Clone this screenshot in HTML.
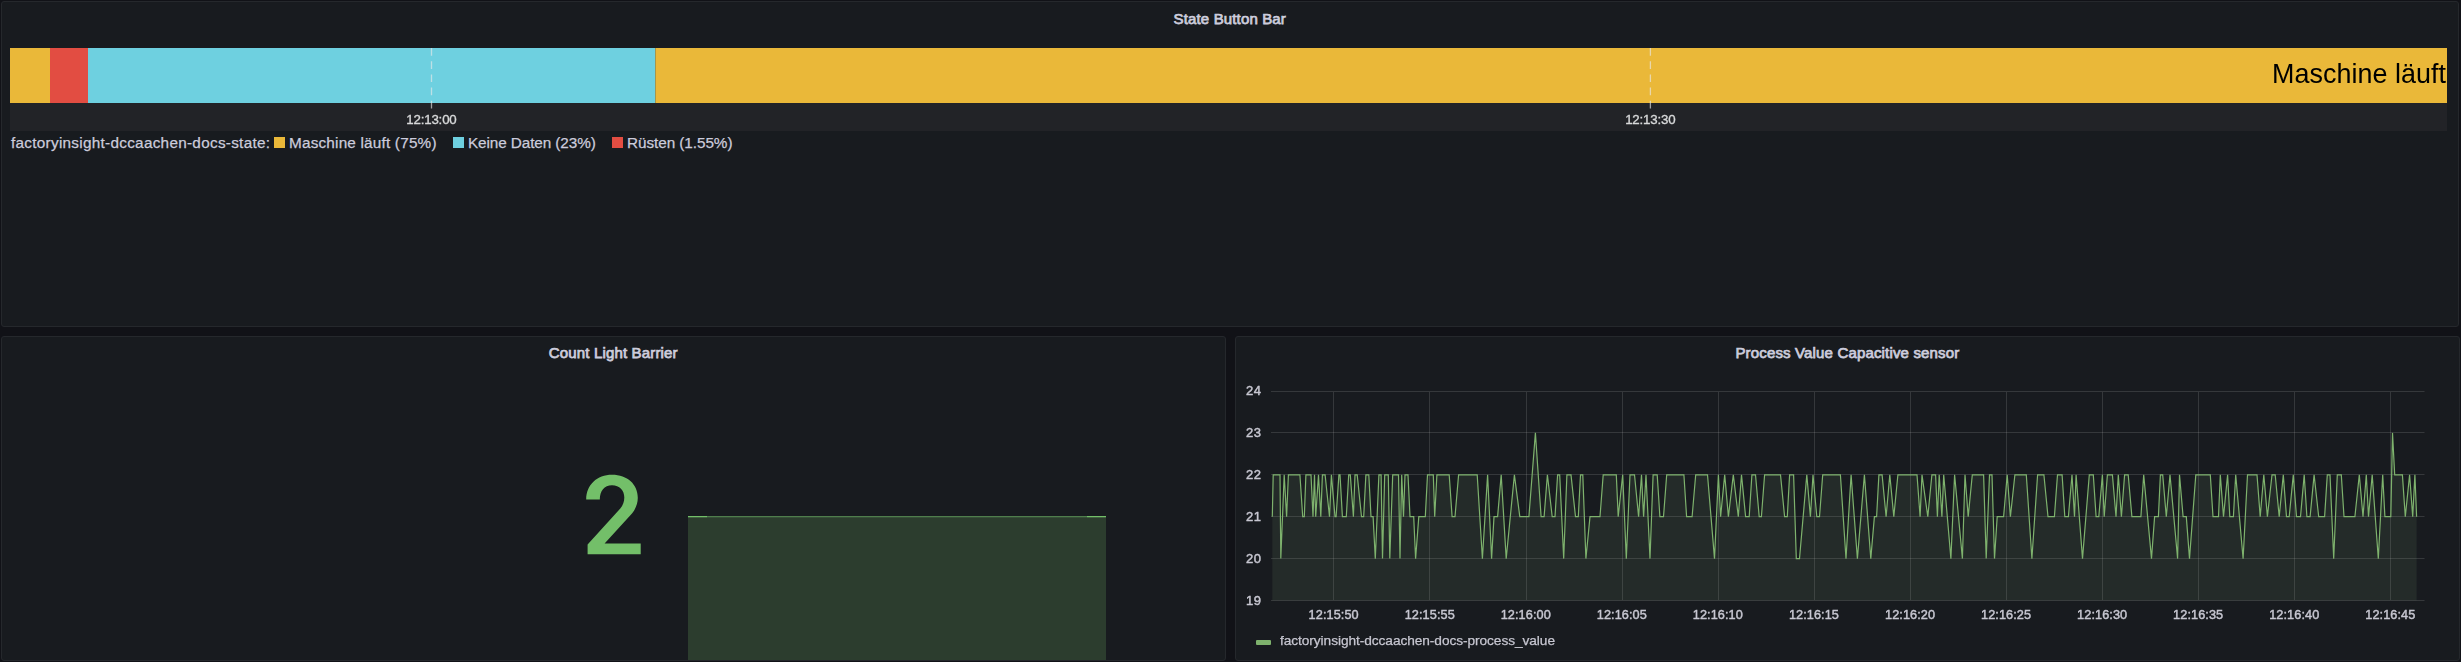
<!DOCTYPE html>
<html><head><meta charset="utf-8"><style>
html,body{margin:0;padding:0;background:#111217;width:2461px;height:662px;overflow:hidden}
svg{display:block}
text{font-family:"Liberation Sans",sans-serif}
</style></head><body>
<svg width="2461" height="662" viewBox="0 0 2461 662">

<rect x="1.5" y="1.5" width="2457" height="325" rx="2.5" fill="#181b1f" stroke="#25282c" stroke-width="1"/>
<rect x="1.5" y="336.5" width="1224" height="324" rx="2.5" fill="#181b1f" stroke="#25282c" stroke-width="1"/>
<rect x="1235.5" y="336.5" width="1224" height="324" rx="2.5" fill="#181b1f" stroke="#25282c" stroke-width="1"/>
<text x="1229.7" y="24.4" font-size="15.0" font-weight="normal" fill="#ccccdc" text-anchor="middle" textLength="112.3" lengthAdjust="spacing" stroke="#ccccdc" stroke-width="0.75">State Button Bar</text>
<text x="613.2" y="358.4" font-size="15.0" font-weight="normal" fill="#ccccdc" text-anchor="middle" textLength="128.7" lengthAdjust="spacing" stroke="#ccccdc" stroke-width="0.75">Count Light Barrier</text>
<text x="1847.3" y="358.4" font-size="15.0" font-weight="normal" fill="#ccccdc" text-anchor="middle" textLength="223.8" lengthAdjust="spacing" stroke="#ccccdc" stroke-width="0.75">Process Value Capacitive sensor</text>
<rect x="10" y="103" width="2437" height="28" fill="#222327"/>
<rect x="10" y="48" width="40" height="55" fill="#eab839"/>
<rect x="50" y="48" width="38" height="55" fill="#e24d42"/>
<rect x="88" y="48" width="567.4" height="55" fill="#6ed0e0"/>
<rect x="655.4" y="48" width="1791.6" height="55" fill="#eab839"/>
<line x1="431.5" y1="48" x2="431.5" y2="108.5" stroke="#e8e8e8" stroke-opacity="0.65" stroke-width="1.3" stroke-dasharray="7.7 5.5"/>
<line x1="1650.4" y1="48" x2="1650.4" y2="108.5" stroke="#e8e8e8" stroke-opacity="0.65" stroke-width="1.3" stroke-dasharray="7.7 5.5"/>
<text x="11" y="148" font-size="15.3" font-weight="normal" fill="#ccccdc" text-anchor="start" textLength="259" lengthAdjust="spacing" stroke="#ccccdc" stroke-width="0.25">factoryinsight-dccaachen-docs-state:</text>
<rect x="274" y="137" width="11" height="11" fill="#eab839"/>
<text x="289" y="148" font-size="15.3" font-weight="normal" fill="#ccccdc" text-anchor="start" textLength="147.5" lengthAdjust="spacing" stroke="#ccccdc" stroke-width="0.25">Maschine läuft (75%)</text>
<rect x="453" y="137" width="11" height="11" fill="#6ed0e0"/>
<text x="468" y="148" font-size="15.3" font-weight="normal" fill="#ccccdc" text-anchor="start" textLength="127.8" lengthAdjust="spacing" stroke="#ccccdc" stroke-width="0.25">Keine Daten (23%)</text>
<rect x="612" y="137" width="11" height="11" fill="#e24d42"/>
<text x="627" y="148" font-size="15.3" font-weight="normal" fill="#ccccdc" text-anchor="start" textLength="105.5" lengthAdjust="spacing" stroke="#ccccdc" stroke-width="0.25">Rüsten (1.55%)</text>
<path d="M612,474.8 C627.5,474.8 637.8,484.5 637.8,497.8 C637.8,503.5 635.8,508.5 632.2,513.3 L604.6,543.4 L640.7,543.4 L640.7,554.2 L587.6,554.2 L587.6,544.6 L620.3,508.6 C623,505.3 624.3,501.6 624.3,497.6 C624.3,490.3 619.6,485.3 612,485.3 C604.2,485.3 599.8,491 599.8,499.6 L586.2,499.6 C586.2,485 597,474.8 612,474.8 Z" fill="#73bf69"/>
<rect x="688" y="517" width="418" height="143" fill="#2c3d2e"/>
<rect x="688" y="516" width="19" height="1.3" fill="#73bf69"/>
<rect x="707" y="516" width="380" height="1.3" fill="#4f7d4c"/>
<rect x="1087" y="516" width="19" height="1.3" fill="#73bf69"/>
<line x1="1271" y1="600.5" x2="2424.5" y2="600.5" stroke="#c8c8c8" stroke-opacity="0.17" stroke-width="1"/>
<line x1="1271" y1="558.5" x2="2424.5" y2="558.5" stroke="#c8c8c8" stroke-opacity="0.17" stroke-width="1"/>
<line x1="1271" y1="516.5" x2="2424.5" y2="516.5" stroke="#c8c8c8" stroke-opacity="0.17" stroke-width="1"/>
<line x1="1271" y1="474.5" x2="2424.5" y2="474.5" stroke="#c8c8c8" stroke-opacity="0.17" stroke-width="1"/>
<line x1="1271" y1="432.5" x2="2424.5" y2="432.5" stroke="#c8c8c8" stroke-opacity="0.17" stroke-width="1"/>
<line x1="1271" y1="391.5" x2="2424.5" y2="391.5" stroke="#c8c8c8" stroke-opacity="0.17" stroke-width="1"/>
<line x1="1333.5" y1="392" x2="1333.5" y2="600" stroke="#c8c8c8" stroke-opacity="0.17" stroke-width="1"/>
<line x1="1429.5" y1="392" x2="1429.5" y2="600" stroke="#c8c8c8" stroke-opacity="0.17" stroke-width="1"/>
<line x1="1526.5" y1="392" x2="1526.5" y2="600" stroke="#c8c8c8" stroke-opacity="0.17" stroke-width="1"/>
<line x1="1622.5" y1="392" x2="1622.5" y2="600" stroke="#c8c8c8" stroke-opacity="0.17" stroke-width="1"/>
<line x1="1718.5" y1="392" x2="1718.5" y2="600" stroke="#c8c8c8" stroke-opacity="0.17" stroke-width="1"/>
<line x1="1814.5" y1="392" x2="1814.5" y2="600" stroke="#c8c8c8" stroke-opacity="0.17" stroke-width="1"/>
<line x1="1910.5" y1="392" x2="1910.5" y2="600" stroke="#c8c8c8" stroke-opacity="0.17" stroke-width="1"/>
<line x1="2006.5" y1="392" x2="2006.5" y2="600" stroke="#c8c8c8" stroke-opacity="0.17" stroke-width="1"/>
<line x1="2102.5" y1="392" x2="2102.5" y2="600" stroke="#c8c8c8" stroke-opacity="0.17" stroke-width="1"/>
<line x1="2198.5" y1="392" x2="2198.5" y2="600" stroke="#c8c8c8" stroke-opacity="0.17" stroke-width="1"/>
<line x1="2294.5" y1="392" x2="2294.5" y2="600" stroke="#c8c8c8" stroke-opacity="0.17" stroke-width="1"/>
<line x1="2390.5" y1="392" x2="2390.5" y2="600" stroke="#c8c8c8" stroke-opacity="0.17" stroke-width="1"/>
<polygon points="1272.3,600.5 1272.3,516.7 1273.2,474.8 1280.0,474.8 1280.8,558.6 1284.2,474.8 1286.6,516.7 1288.4,474.8 1299.9,474.8 1302.7,516.7 1304.3,516.7 1305.9,474.8 1311.0,474.8 1313.0,516.7 1314.5,474.8 1315.7,516.7 1318.5,474.8 1320.8,516.7 1322.4,474.8 1325.1,474.8 1329.5,516.7 1331.4,474.8 1335.0,516.7 1336.1,516.7 1338.9,474.8 1340.0,474.8 1342.4,516.7 1346.3,516.7 1348.7,474.8 1350.3,474.8 1353.4,516.7 1355.0,474.8 1357.2,474.8 1361.5,516.7 1363.7,516.7 1365.9,474.8 1368.8,474.8 1371.0,516.7 1373.1,516.7 1375.3,558.6 1378.9,474.8 1381.1,474.8 1382.5,558.6 1384.7,474.8 1388.3,474.8 1389.8,558.6 1392.7,474.8 1398.5,474.8 1400.0,558.6 1401.7,474.8 1403.5,516.7 1405.0,474.8 1408.0,474.8 1410.0,516.7 1413.7,516.7 1415.6,558.6 1418.8,516.7 1425.3,516.7 1427.5,474.8 1433.3,474.8 1434.7,516.7 1436.9,474.8 1449.2,474.8 1452.1,516.7 1455.0,516.7 1458.6,474.8 1477.2,474.8 1482.4,558.6 1487.6,474.8 1491.6,558.6 1494.0,516.7 1497.6,516.7 1501.2,474.8 1506.2,558.6 1514.4,474.8 1519.8,516.7 1528.9,516.7 1535.4,432.9 1541.1,516.7 1544.1,516.7 1547.4,474.8 1552.2,516.7 1555.0,516.7 1557.6,474.8 1559.7,474.8 1563.7,558.6 1566.9,474.8 1571.0,474.8 1575.5,516.7 1578.3,516.7 1580.5,474.8 1582.8,474.8 1585.9,558.6 1590.0,516.7 1600.0,516.7 1603.2,474.8 1616.3,474.8 1618.2,516.7 1622.7,474.8 1626.3,558.6 1630.0,474.8 1634.5,474.8 1638.6,516.7 1641.5,474.8 1643.6,516.7 1646.0,474.8 1650.0,558.6 1653.1,474.8 1657.2,474.8 1659.9,516.7 1663.5,516.7 1666.7,474.8 1683.9,474.8 1686.6,516.7 1692.1,516.7 1695.7,474.8 1707.5,474.8 1714.5,558.6 1718.4,474.8 1720.6,516.7 1724.7,474.8 1728.4,516.7 1733.3,474.8 1738.3,516.7 1741.5,474.8 1745.6,516.7 1749.2,516.7 1751.9,474.8 1755.5,474.8 1759.2,516.7 1761.4,516.7 1764.6,474.8 1780.5,474.8 1784.6,516.7 1787.3,516.7 1789.6,474.8 1793.6,474.8 1796.3,558.6 1799.5,558.6 1806.8,474.8 1810.4,516.7 1813.0,474.8 1816.8,516.7 1819.5,516.7 1822.7,474.8 1840.4,474.8 1846.0,558.6 1851.1,474.8 1857.4,558.6 1864.4,474.8 1870.8,558.6 1874.4,516.7 1876.6,516.7 1878.9,474.8 1882.1,474.8 1886.1,516.7 1889.8,474.8 1893.8,516.7 1897.9,474.8 1917.0,474.8 1920.1,516.7 1922.0,474.8 1927.8,516.7 1931.9,474.8 1935.6,474.8 1937.4,516.7 1939.2,474.8 1941.9,516.7 1943.7,474.8 1950.9,558.6 1954.6,474.8 1962.4,558.6 1965.0,474.8 1968.2,516.7 1972.3,474.8 1983.6,474.8 1986.2,558.6 1989.5,474.8 1992.0,474.8 1994.5,558.6 1997.2,516.7 2003.6,516.7 2007.2,474.8 2010.4,516.7 2014.9,474.8 2026.3,474.8 2031.9,558.6 2037.6,474.8 2043.9,474.8 2048.0,516.7 2054.4,516.7 2057.5,474.8 2062.1,474.8 2064.8,516.7 2068.4,516.7 2072.0,474.8 2074.5,516.7 2076.1,474.8 2082.5,558.6 2089.3,474.8 2093.3,474.8 2096.1,516.7 2098.8,516.7 2102.4,474.8 2104.2,516.7 2107.4,474.8 2112.4,474.8 2116.0,516.7 2118.3,474.8 2121.4,516.7 2124.6,474.8 2128.2,474.8 2131.9,516.7 2140.9,516.7 2143.7,474.8 2151.5,558.6 2154.6,516.7 2158.4,516.7 2160.4,474.8 2162.7,474.8 2166.3,516.7 2170.0,474.8 2177.6,558.6 2179.5,474.8 2183.1,516.7 2186.3,516.7 2189.5,558.6 2195.8,474.8 2210.3,474.8 2213.0,516.7 2218.5,516.7 2220.3,474.8 2223.5,516.7 2227.6,474.8 2229.8,516.7 2233.4,516.7 2235.7,474.8 2243.1,558.6 2247.5,474.8 2257.0,474.8 2260.2,516.7 2263.8,474.8 2267.4,516.7 2272.0,474.8 2275.2,474.8 2279.2,516.7 2283.3,474.8 2286.5,516.7 2289.2,516.7 2293.3,474.8 2296.5,516.7 2300.5,516.7 2304.2,474.8 2306.9,516.7 2310.1,516.7 2314.1,474.8 2318.7,516.7 2324.6,516.7 2327.3,474.8 2330.0,474.8 2333.7,558.6 2337.3,474.8 2341.3,474.8 2344.0,516.7 2354.9,516.7 2359.3,474.8 2363.0,516.7 2366.3,474.8 2368.5,516.7 2372.2,474.8 2378.3,558.6 2382.7,474.8 2384.9,516.7 2390.8,516.7 2392.5,432.9 2394.7,474.8 2402.4,474.8 2405.3,516.7 2409.6,474.8 2412.7,516.7 2414.9,474.8 2416.6,516.7 2416.6,600.5" fill="#8ab07e" fill-opacity="0.11"/>
<polyline points="1272.3,516.7 1273.2,474.8 1280.0,474.8 1280.8,558.6 1284.2,474.8 1286.6,516.7 1288.4,474.8 1299.9,474.8 1302.7,516.7 1304.3,516.7 1305.9,474.8 1311.0,474.8 1313.0,516.7 1314.5,474.8 1315.7,516.7 1318.5,474.8 1320.8,516.7 1322.4,474.8 1325.1,474.8 1329.5,516.7 1331.4,474.8 1335.0,516.7 1336.1,516.7 1338.9,474.8 1340.0,474.8 1342.4,516.7 1346.3,516.7 1348.7,474.8 1350.3,474.8 1353.4,516.7 1355.0,474.8 1357.2,474.8 1361.5,516.7 1363.7,516.7 1365.9,474.8 1368.8,474.8 1371.0,516.7 1373.1,516.7 1375.3,558.6 1378.9,474.8 1381.1,474.8 1382.5,558.6 1384.7,474.8 1388.3,474.8 1389.8,558.6 1392.7,474.8 1398.5,474.8 1400.0,558.6 1401.7,474.8 1403.5,516.7 1405.0,474.8 1408.0,474.8 1410.0,516.7 1413.7,516.7 1415.6,558.6 1418.8,516.7 1425.3,516.7 1427.5,474.8 1433.3,474.8 1434.7,516.7 1436.9,474.8 1449.2,474.8 1452.1,516.7 1455.0,516.7 1458.6,474.8 1477.2,474.8 1482.4,558.6 1487.6,474.8 1491.6,558.6 1494.0,516.7 1497.6,516.7 1501.2,474.8 1506.2,558.6 1514.4,474.8 1519.8,516.7 1528.9,516.7 1535.4,432.9 1541.1,516.7 1544.1,516.7 1547.4,474.8 1552.2,516.7 1555.0,516.7 1557.6,474.8 1559.7,474.8 1563.7,558.6 1566.9,474.8 1571.0,474.8 1575.5,516.7 1578.3,516.7 1580.5,474.8 1582.8,474.8 1585.9,558.6 1590.0,516.7 1600.0,516.7 1603.2,474.8 1616.3,474.8 1618.2,516.7 1622.7,474.8 1626.3,558.6 1630.0,474.8 1634.5,474.8 1638.6,516.7 1641.5,474.8 1643.6,516.7 1646.0,474.8 1650.0,558.6 1653.1,474.8 1657.2,474.8 1659.9,516.7 1663.5,516.7 1666.7,474.8 1683.9,474.8 1686.6,516.7 1692.1,516.7 1695.7,474.8 1707.5,474.8 1714.5,558.6 1718.4,474.8 1720.6,516.7 1724.7,474.8 1728.4,516.7 1733.3,474.8 1738.3,516.7 1741.5,474.8 1745.6,516.7 1749.2,516.7 1751.9,474.8 1755.5,474.8 1759.2,516.7 1761.4,516.7 1764.6,474.8 1780.5,474.8 1784.6,516.7 1787.3,516.7 1789.6,474.8 1793.6,474.8 1796.3,558.6 1799.5,558.6 1806.8,474.8 1810.4,516.7 1813.0,474.8 1816.8,516.7 1819.5,516.7 1822.7,474.8 1840.4,474.8 1846.0,558.6 1851.1,474.8 1857.4,558.6 1864.4,474.8 1870.8,558.6 1874.4,516.7 1876.6,516.7 1878.9,474.8 1882.1,474.8 1886.1,516.7 1889.8,474.8 1893.8,516.7 1897.9,474.8 1917.0,474.8 1920.1,516.7 1922.0,474.8 1927.8,516.7 1931.9,474.8 1935.6,474.8 1937.4,516.7 1939.2,474.8 1941.9,516.7 1943.7,474.8 1950.9,558.6 1954.6,474.8 1962.4,558.6 1965.0,474.8 1968.2,516.7 1972.3,474.8 1983.6,474.8 1986.2,558.6 1989.5,474.8 1992.0,474.8 1994.5,558.6 1997.2,516.7 2003.6,516.7 2007.2,474.8 2010.4,516.7 2014.9,474.8 2026.3,474.8 2031.9,558.6 2037.6,474.8 2043.9,474.8 2048.0,516.7 2054.4,516.7 2057.5,474.8 2062.1,474.8 2064.8,516.7 2068.4,516.7 2072.0,474.8 2074.5,516.7 2076.1,474.8 2082.5,558.6 2089.3,474.8 2093.3,474.8 2096.1,516.7 2098.8,516.7 2102.4,474.8 2104.2,516.7 2107.4,474.8 2112.4,474.8 2116.0,516.7 2118.3,474.8 2121.4,516.7 2124.6,474.8 2128.2,474.8 2131.9,516.7 2140.9,516.7 2143.7,474.8 2151.5,558.6 2154.6,516.7 2158.4,516.7 2160.4,474.8 2162.7,474.8 2166.3,516.7 2170.0,474.8 2177.6,558.6 2179.5,474.8 2183.1,516.7 2186.3,516.7 2189.5,558.6 2195.8,474.8 2210.3,474.8 2213.0,516.7 2218.5,516.7 2220.3,474.8 2223.5,516.7 2227.6,474.8 2229.8,516.7 2233.4,516.7 2235.7,474.8 2243.1,558.6 2247.5,474.8 2257.0,474.8 2260.2,516.7 2263.8,474.8 2267.4,516.7 2272.0,474.8 2275.2,474.8 2279.2,516.7 2283.3,474.8 2286.5,516.7 2289.2,516.7 2293.3,474.8 2296.5,516.7 2300.5,516.7 2304.2,474.8 2306.9,516.7 2310.1,516.7 2314.1,474.8 2318.7,516.7 2324.6,516.7 2327.3,474.8 2330.0,474.8 2333.7,558.6 2337.3,474.8 2341.3,474.8 2344.0,516.7 2354.9,516.7 2359.3,474.8 2363.0,516.7 2366.3,474.8 2368.5,516.7 2372.2,474.8 2378.3,558.6 2382.7,474.8 2384.9,516.7 2390.8,516.7 2392.5,432.9 2394.7,474.8 2402.4,474.8 2405.3,516.7 2409.6,474.8 2412.7,516.7 2414.9,474.8 2416.6,516.7" fill="none" stroke="#7eb26d" stroke-width="1.2" stroke-linejoin="miter" stroke-miterlimit="4"/>
<rect x="1256" y="640" width="15" height="5" rx="1" fill="#7eb26d"/>
</svg>
<svg width="2461" height="662" viewBox="0 0 2461 662" style="position:absolute;left:0;top:0;will-change:transform">
<text x="431.5" y="123.7" font-size="13.3" font-weight="normal" fill="#d8d9da" text-anchor="middle" textLength="50.5" lengthAdjust="spacing" stroke="#d8d9da" stroke-width="0.35">12:13:00</text>
<text x="1650.4" y="123.7" font-size="13.3" font-weight="normal" fill="#d8d9da" text-anchor="middle" textLength="50.5" lengthAdjust="spacing" stroke="#d8d9da" stroke-width="0.35">12:13:30</text>
<text x="2446.1" y="83.0" font-size="26.9" font-weight="normal" fill="#000" text-anchor="end" textLength="174" lengthAdjust="spacing" >Maschine läuft</text>
<text x="1260.9" y="604.5" font-size="13" font-weight="normal" fill="#c7c7d1" text-anchor="end" textLength="15" lengthAdjust="spacing" stroke="#c7c7d1" stroke-width="0.45">19</text>
<text x="1260.9" y="562.6" font-size="13" font-weight="normal" fill="#c7c7d1" text-anchor="end" textLength="15" lengthAdjust="spacing" stroke="#c7c7d1" stroke-width="0.45">20</text>
<text x="1260.9" y="520.7" font-size="13" font-weight="normal" fill="#c7c7d1" text-anchor="end" textLength="15" lengthAdjust="spacing" stroke="#c7c7d1" stroke-width="0.45">21</text>
<text x="1260.9" y="478.8" font-size="13" font-weight="normal" fill="#c7c7d1" text-anchor="end" textLength="15" lengthAdjust="spacing" stroke="#c7c7d1" stroke-width="0.45">22</text>
<text x="1260.9" y="436.9" font-size="13" font-weight="normal" fill="#c7c7d1" text-anchor="end" textLength="15" lengthAdjust="spacing" stroke="#c7c7d1" stroke-width="0.45">23</text>
<text x="1260.9" y="395.0" font-size="13" font-weight="normal" fill="#c7c7d1" text-anchor="end" textLength="15" lengthAdjust="spacing" stroke="#c7c7d1" stroke-width="0.45">24</text>
<text x="1333.6" y="618.8" font-size="12.7" font-weight="normal" fill="#c7c7d1" text-anchor="middle" textLength="50" lengthAdjust="spacing" stroke="#c7c7d1" stroke-width="0.45">12:15:50</text>
<text x="1429.7" y="618.8" font-size="12.7" font-weight="normal" fill="#c7c7d1" text-anchor="middle" textLength="50" lengthAdjust="spacing" stroke="#c7c7d1" stroke-width="0.45">12:15:55</text>
<text x="1525.7" y="618.8" font-size="12.7" font-weight="normal" fill="#c7c7d1" text-anchor="middle" textLength="50" lengthAdjust="spacing" stroke="#c7c7d1" stroke-width="0.45">12:16:00</text>
<text x="1621.8" y="618.8" font-size="12.7" font-weight="normal" fill="#c7c7d1" text-anchor="middle" textLength="50" lengthAdjust="spacing" stroke="#c7c7d1" stroke-width="0.45">12:16:05</text>
<text x="1717.8" y="618.8" font-size="12.7" font-weight="normal" fill="#c7c7d1" text-anchor="middle" textLength="50" lengthAdjust="spacing" stroke="#c7c7d1" stroke-width="0.45">12:16:10</text>
<text x="1813.9" y="618.8" font-size="12.7" font-weight="normal" fill="#c7c7d1" text-anchor="middle" textLength="50" lengthAdjust="spacing" stroke="#c7c7d1" stroke-width="0.45">12:16:15</text>
<text x="1910.0" y="618.8" font-size="12.7" font-weight="normal" fill="#c7c7d1" text-anchor="middle" textLength="50" lengthAdjust="spacing" stroke="#c7c7d1" stroke-width="0.45">12:16:20</text>
<text x="2006.0" y="618.8" font-size="12.7" font-weight="normal" fill="#c7c7d1" text-anchor="middle" textLength="50" lengthAdjust="spacing" stroke="#c7c7d1" stroke-width="0.45">12:16:25</text>
<text x="2102.1" y="618.8" font-size="12.7" font-weight="normal" fill="#c7c7d1" text-anchor="middle" textLength="50" lengthAdjust="spacing" stroke="#c7c7d1" stroke-width="0.45">12:16:30</text>
<text x="2198.1" y="618.8" font-size="12.7" font-weight="normal" fill="#c7c7d1" text-anchor="middle" textLength="50" lengthAdjust="spacing" stroke="#c7c7d1" stroke-width="0.45">12:16:35</text>
<text x="2294.2" y="618.8" font-size="12.7" font-weight="normal" fill="#c7c7d1" text-anchor="middle" textLength="50" lengthAdjust="spacing" stroke="#c7c7d1" stroke-width="0.45">12:16:40</text>
<text x="2390.3" y="618.8" font-size="12.7" font-weight="normal" fill="#c7c7d1" text-anchor="middle" textLength="50" lengthAdjust="spacing" stroke="#c7c7d1" stroke-width="0.45">12:16:45</text>
<text x="1280" y="645" font-size="13.7" font-weight="normal" fill="#c7c7d1" text-anchor="start" textLength="275" lengthAdjust="spacing" stroke="#c7c7d1" stroke-width="0.25">factoryinsight-dccaachen-docs-process_value</text>
</svg></body></html>
